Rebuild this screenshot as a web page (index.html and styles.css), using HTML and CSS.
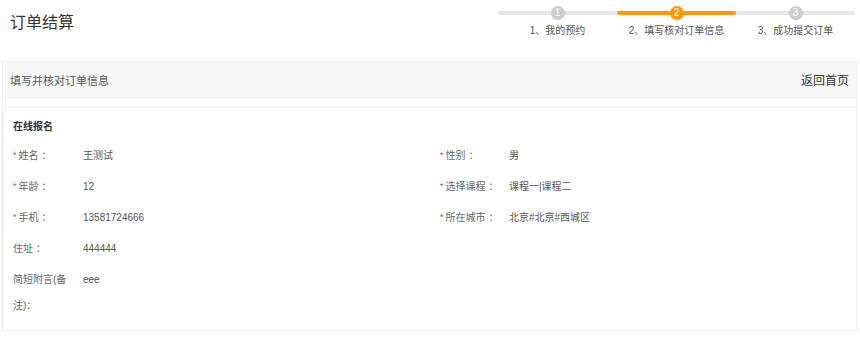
FILE: index.html
```html
<!DOCTYPE html>
<html lang="zh-CN">
<head>
    <meta charset="UTF-8">
    <meta name="viewport" content="width=device-width, initial-scale=1.0">
    <title>订单结算</title>
    <link rel="stylesheet" href="styles.css">
</head>
<body>
    <div class="top-bar">
        <h1 class="page-title">订单结算</h1>
        <div class="steps">
            <div class="step">
                <div class="step-track"><span class="step-num">1</span></div>
                <div class="step-label">1、我的预约</div>
            </div>
            <div class="step active">
                <div class="step-track"><span class="step-num">2</span></div>
                <div class="step-label">2、填写核对订单信息</div>
            </div>
            <div class="step">
                <div class="step-track"><span class="step-num">3</span></div>
                <div class="step-label">3、成功提交订单</div>
            </div>
        </div>
    </div>

    <div class="panel">
        <div class="panel-header">
            <span class="panel-title">填写并核对订单信息</span>
            <a class="back-link" href="#">返回首页</a>
        </div>
        <div class="panel-body">
            <div class="form-section">
                <h3 class="form-title">在线报名</h3>
                <div class="form-grid">
                    <div class="form-row">
                        <span class="form-label"><i class="req">*</i>姓名<span class="colon">：</span></span>
                        <span class="form-value">王测试</span>
                    </div>
                    <div class="form-row">
                        <span class="form-label"><i class="req">*</i>性别<span class="colon">：</span></span>
                        <span class="form-value">男</span>
                    </div>
                    <div class="form-row">
                        <span class="form-label"><i class="req">*</i>年龄<span class="colon">：</span></span>
                        <span class="form-value">12</span>
                    </div>
                    <div class="form-row">
                        <span class="form-label"><i class="req">*</i>选择课程<span class="colon">：</span></span>
                        <span class="form-value">课程一|课程二</span>
                    </div>
                    <div class="form-row">
                        <span class="form-label"><i class="req">*</i>手机<span class="colon">：</span></span>
                        <span class="form-value">13581724666</span>
                    </div>
                    <div class="form-row">
                        <span class="form-label"><i class="req">*</i>所在城市<span class="colon">：</span></span>
                        <span class="form-value">北京#北京#西城区</span>
                    </div>
                    <div class="form-row">
                        <span class="form-label">住址<span class="colon">：</span></span>
                        <span class="form-value">444444</span>
                    </div>
                    <div class="form-row"></div>
                    <div class="form-row">
                        <span class="form-label">简短附言(备注)：</span>
                        <span class="form-value">eee</span>
                    </div>
                </div>
            </div>
        </div>
    </div>
</body>
</html>
```

FILE: styles.css
```css
body, html {
    margin: 0;
    font-family: "Liberation Sans", "Noto Sans CJK SC", sans-serif;
    color: #555;
    background: #fff;
}

.top-bar {
    display: flex;
    justify-content: space-between;
    align-items: flex-start;
    height: 61px;
    padding: 0 5px 0 10px;
}

.page-title {
    margin: 12px 0 0 0;
    font-size: 16px;
    font-weight: normal;
    line-height: 22px;
    color: #333;
}

/* steps */
.steps {
    display: flex;
    margin-top: 6px;
}

.step {
    width: 119px;
}

.step-track {
    position: relative;
    height: 4px;
    margin-top: 5px;
    background: #e6e6e6;
    border-radius: 2px;
}

.step-num {
    position: absolute;
    left: 50%;
    top: -5px;
    width: 14px;
    height: 14px;
    margin-left: -7px;
    border-radius: 50%;
    background: #ccc;
    color: #fff;
    font-size: 10px;
    line-height: 14px;
    text-align: center;
}

.step.active .step-track,
.step.active .step-num {
    background: #f90;
}

.step-label {
    margin-top: 9px;
    font-size: 10px;
    line-height: 14px;
    text-align: center;
    color: #555;
}

/* panel */
.panel {
    margin: 0 3px 0 2px;
    border: 1px solid #eee;
    border-bottom: none;
}

.panel-header {
    display: flex;
    justify-content: space-between;
    align-items: center;
    height: 35px;
    padding: 0 7px;
    background: #f7f7f7;
    border-bottom: 1px solid #ececec;
}

.panel-title {
    font-size: 11px;
    color: #555;
}

.back-link {
    font-size: 12px;
    color: #333;
    text-decoration: none;
}

.panel-body {
    padding-top: 9px;
}

.form-section {
    padding: 12px 10px 9px 10px;
    border-top: 1px solid #f2f2f2;
    border-bottom: 1px solid #eee;
}

.form-title {
    margin: 0 0 6px 0;
    font-size: 10px;
    line-height: 14px;
    font-weight: bold;
    color: #333;
}

.form-grid {
    display: grid;
    grid-template-columns: 427px 1fr;
}

.form-row {
    display: flex;
    padding: 3px 0 2px 0;
    font-size: 10px;
    line-height: 26px;
}

.form-label {
    width: 62px;
    margin-right: 8px;
    color: #666;
}

.form-row:nth-child(even) .form-label {
    width: 61px;
}

.colon {
    padding-left: 3px;
}

.req {
    position: relative;
    top: -1px;
    font-style: normal;
    font-size: 9px;
    color: #e4393c;
    margin-right: 2px;
}

.form-value {
    color: #555;
}
```
